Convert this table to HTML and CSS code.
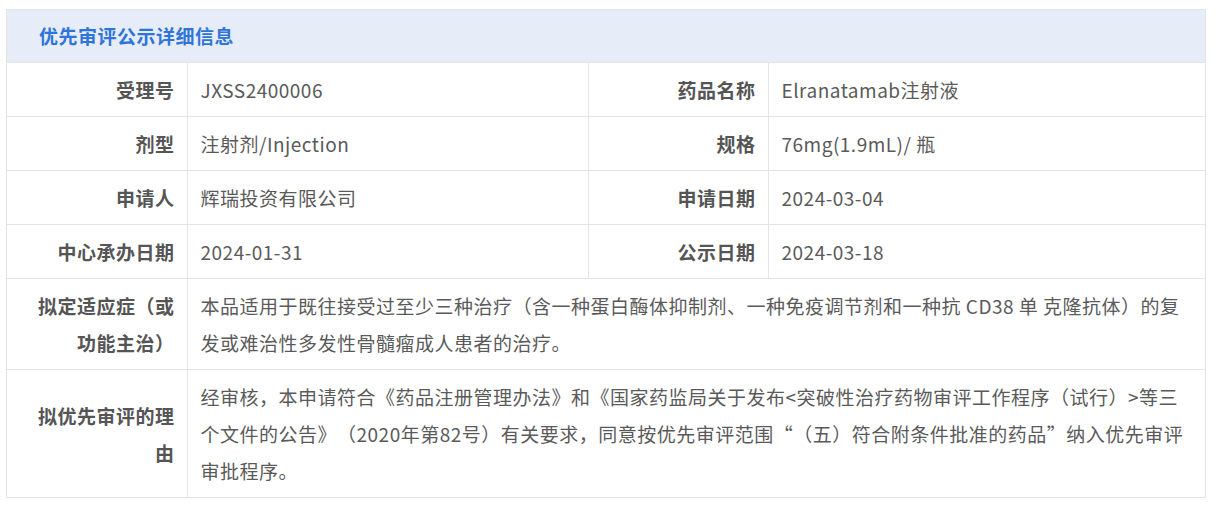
FILE: index.html
```html
<!DOCTYPE html>
<html lang="zh-CN">
<head>
<meta charset="utf-8">
<title>优先审评公示详细信息</title>
<link rel="stylesheet" href="styles.css">
</head>
<body>
<div class="panel">
  <div class="panel-title">优先审评公示详细信息</div>
  <table class="detail">
    <colgroup>
      <col class="c-label"><col class="c-value"><col class="c-label"><col class="c-value2">
    </colgroup>
    <tr>
      <th>受理号</th><td>JXSS2400006</td>
      <th>药品名称</th><td>Elranatamab注射液</td>
    </tr>
    <tr>
      <th>剂型</th><td>注射剂/Injection</td>
      <th>规格</th><td>76mg(1.9mL)/ 瓶</td>
    </tr>
    <tr>
      <th>申请人</th><td>辉瑞投资有限公司</td>
      <th>申请日期</th><td>2024-03-04</td>
    </tr>
    <tr>
      <th>中心承办日期</th><td>2024-01-31</td>
      <th>公示日期</th><td>2024-03-18</td>
    </tr>
    <tr>
      <th>拟定适应症（或功能主治）</th>
      <td colspan="3" class="long">本品适用于既往接受过至少三种治疗（含一种蛋白酶体抑制剂、一种免疫调节剂和一种抗 CD38 单 克隆抗体）的复发或难治性多发性骨髓瘤成人患者的治疗。</td>
    </tr>
    <tr>
      <th>拟优先审评的理由</th>
      <td colspan="3" class="long">经审核，本申请符合《药品注册管理办法》和《国家药监局关于发布&lt;突破性治疗药物审评工作程序（试行）&gt;等三个文件的公告》（2020年第82号）有关要求，同意按优先审评范围“（五）符合附条件批准的药品”纳入优先审评审批程序。</td>
    </tr>
  </table>
</div>
</body>
</html>
```

FILE: styles.css
```css
html, body {
  margin: 0;
  padding: 0;
  background: #ffffff;
}
body {
  font-family: "Noto Sans CJK SC", "Noto Sans", sans-serif;
  color: #555555;
  text-spacing-trim: space-all;
}
.panel {
  width: 1200px;
  margin: 9px 0 0 6px;
  border: 1px solid #e4e4e4;
  box-sizing: border-box;
}
.panel-title {
  height: 52px;
  line-height: 52px;
  background: #e6edf9;
  color: #2f74d8;
  font-weight: bold;
  font-size: 19px;
  letter-spacing: 0.5px;
  padding-left: 32px;
  border-bottom: 1px solid #e4e4e4;
}
.detail {
  width: 100%;
  border-collapse: collapse;
  table-layout: fixed;
  font-size: 19px;
  letter-spacing: 0.5px;
}
.c-label { width: 180px; }
.c-value { width: 401px; }
.c-value2 { width: auto; }
.detail th,
.detail td {
  border: 1px solid #e4e4e4;
  line-height: 37px;
  padding: 8px 12px 8px 13px;
  vertical-align: middle;
}
.detail th {
  padding-left: 16px;
}
.detail td.long {
  padding-right: 20px;
}
.detail tr:first-child th,
.detail tr:first-child td { border-top: none; }
.detail tr th:first-child { border-left: none; }
.detail tr td:last-child { border-right: none; }
.detail tr:last-child th,
.detail tr:last-child td { border-bottom: none; }
.detail th {
  text-align: right;
  font-weight: bold;
  color: #555555;
}
.detail td {
  text-align: left;
  color: #5a5a5a;
}
```
